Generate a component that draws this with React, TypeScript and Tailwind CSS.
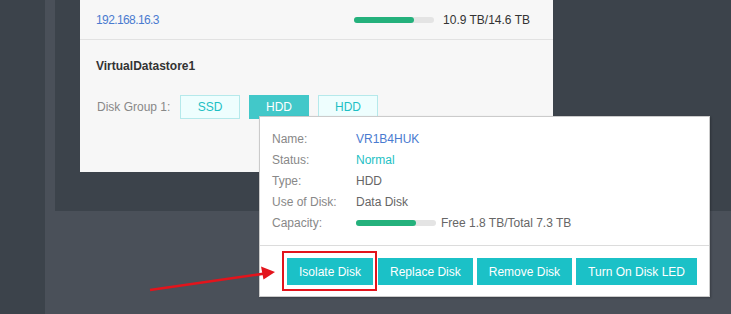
const font = "font-['Liberation_Sans',Arial,sans-serif]";

const ProgressBar = ({ percent }: { percent: number }) => {
  return (
    <div className="h-[6px] w-[80px] rounded-full bg-[#e4e4e4]">
      <div
        className="h-full rounded-full bg-[#24b17c]"
        style={{ width: `${percent}%` }}
      />
    </div>
  );
};

const diskBoxes = [
  { label: "SSD", active: false },
  { label: "HDD", active: true },
  { label: "HDD", active: false },
];

const actions = ["Isolate Disk", "Replace Disk", "Remove Disk", "Turn On Disk LED"];

const DiskPopover = () => {
  const rows = [
    { label: "Name:", value: <span className="text-[#4a7bd0]">VR1B4HUK</span> },
    { label: "Status:", value: <span className="text-[#1dbfc4]">Normal</span> },
    { label: "Type:", value: <span className="text-[#666]">HDD</span> },
    { label: "Use of Disk:", value: <span className="text-[#666]">Data Disk</span> },
    {
      label: "Capacity:",
      value: (
        <div className="flex items-center gap-[5px]">
          <ProgressBar percent={75} />
          <span className="text-[#666]">Free 1.8 TB/Total 7.3 TB</span>
        </div>
      ),
    },
  ];

  return (
    <div className="absolute left-[259px] top-[116px] w-[451px] border border-[#cbcbcb] bg-white shadow-[1px_1px_2px_rgba(0,0,0,0.25)]">
      <div className="px-3 pb-3 pt-[11px]">
        {rows.map((row) => (
          <div key={row.label} className="flex h-[21px] items-center text-[12px]">
            <span className="w-[84px] text-[#888]">{row.label}</span>
            {row.value}
          </div>
        ))}
      </div>
      <div className="flex gap-1 border-t border-[#dcdcdc] pb-[11px] pl-[27px] pt-3">
        {actions.map((action, i) => (
          <div key={action} className={i === 0 ? "relative mr-px" : ""}>
            <button className="h-[27px] bg-[#1bc1c7] px-3 text-[12px] text-white">
              {action}
            </button>
            {i === 0 && (
              <div className="pointer-events-none absolute -bottom-[6px] -left-[5px] -right-[4px] -top-[7px] border-2 border-[#e3141c]" />
            )}
          </div>
        ))}
      </div>
    </div>
  );
};

export default function App() {
  return (
    <div className={`relative flex h-[314px] w-[731px] overflow-hidden bg-[#4a5059] ${font}`}>
      <div className="w-[45px] bg-[#3c434b]" />
      <div className="flex-1 pl-[10px]">
        <div className="h-[211px] bg-[#3c434b] pl-[25px]">
          <div className="w-[473px] bg-[#f7f7f7] pb-[53px]">
            <div className="flex h-[40px] items-center justify-between border-b border-[#e2e2e2] pl-4 pr-[23px]">
              <span className="text-[12px] tracking-[-0.6px] text-[#4a7bd0]">192.168.16.3</span>
              <div className="flex items-center gap-[9px]">
                <ProgressBar percent={75} />
                <span className="text-[12px] text-[#333]">10.9 TB/14.6 TB</span>
              </div>
            </div>
            <div className="pl-4 pt-[17px] text-[12px] font-bold text-[#333]">
              VirtualDatastore1
            </div>
            <div className="mt-[20px] flex items-center pl-[17px]">
              <span className="w-[83px] text-[12px] text-[#888]">Disk Group 1:</span>
              <div className="flex gap-[9px]">
                {diskBoxes.map((box, i) => (
                  <div
                    key={i}
                    className={
                      box.active
                        ? "flex h-[24px] w-[60px] items-center justify-center border border-[#42c8c9] bg-[#42c8c9] text-[12px] text-white"
                        : "flex h-[24px] w-[60px] items-center justify-center border border-[#b5e9eb] bg-[#eefefe] text-[12px] text-[#1dbfc4]"
                    }
                  >
                    {box.label}
                  </div>
                ))}
              </div>
            </div>
          </div>
        </div>
      </div>

      <DiskPopover />

      <svg
        className="absolute left-[145px] top-[262px]"
        width="135"
        height="34"
        viewBox="0 0 135 34"
      >
        <line x1="5" y1="28" x2="120" y2="11.5" stroke="#e3141c" strokeWidth="2.6" />
        <polygon points="130,10 116,4.5 118.5,17.5" fill="#e3141c" />
      </svg>
    </div>
  );
}
